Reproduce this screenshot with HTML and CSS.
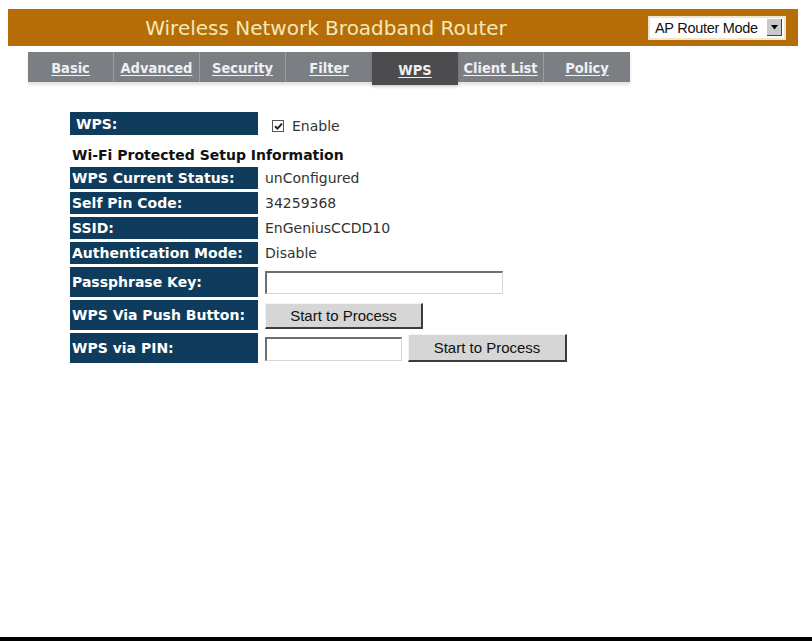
FILE: index.html
```html
<!DOCTYPE html>
<html>
<head>
<meta charset="utf-8">
<title>Wireless Network Broadband Router</title>
<link rel="stylesheet" href="styles.css">
</head>
<body>
<div class="page">
  <header class="topbar">
    <div class="title">Wireless Network Broadband Router</div>
    <div class="mode-select">
      <span class="mode-text">AP Router Mode</span>
      <span class="mode-btn"><svg width="7" height="5" viewBox="0 0 7 5"><path d="M0 0H7L3.5 4.5Z" fill="#000"/></svg></span>
    </div>
  </header>

  <nav class="tabs">
    <a class="tab sep" href="#">Basic</a>
    <a class="tab sep" href="#">Advanced</a>
    <a class="tab sep" href="#">Security</a>
    <a class="tab" href="#">Filter</a>
    <a class="tab active" href="#">WPS</a>
    <a class="tab sep" href="#">Client List</a>
    <a class="tab" href="#">Policy</a>
  </nav>

  <main class="content">
    <div class="row row-wps">
      <div class="label label-wide">WPS:</div>
      <div class="value enable">
        <span class="check"><svg width="9" height="9" viewBox="0 0 9 9"><path d="M1 4.2L3.4 6.6L8 1.6" fill="none" stroke="#222" stroke-width="2"/></svg></span>
        <span>Enable</span>
      </div>
    </div>

    <div class="section-title">Wi-Fi Protected Setup Information</div>

    <div class="grid">
      <div class="label">WPS Current Status:</div>
      <div class="value">unConfigured</div>

      <div class="label">Self Pin Code:</div>
      <div class="value">34259368</div>

      <div class="label">SSID:</div>
      <div class="value">EnGeniusCCDD10</div>

      <div class="label">Authentication Mode:</div>
      <div class="value">Disable</div>

      <div class="label">Passphrase Key:</div>
      <div class="value"><span class="textbox textbox-long"></span></div>

      <div class="label">WPS Via Push Button:</div>
      <div class="value"><span class="button button-push">Start to Process</span></div>

      <div class="label">WPS via PIN:</div>
      <div class="value pin">
        <span class="textbox textbox-short"></span>
        <span class="button button-pin">Start to Process</span>
      </div>
    </div>
  </main>

  <div class="spacer"></div>
  <div class="bottom-rule"></div>
</div>
</body>
</html>
```

FILE: styles.css
```css
html, body {
  margin: 0;
  padding: 0;
  background: #ffffff;
}

.page {
  width: 812px;
  height: 641px;
  display: flex;
  flex-direction: column;
  font-family: "DejaVu Sans", Verdana, sans-serif;
}

/* ---------- header ---------- */
.topbar {
  margin: 9px 14px 0 8px;
  height: 37px;
  background: #b66d08;
  display: flex;
  align-items: center;
}

.title {
  width: 636px;
  text-align: center;
  font-family: "DejaVu Sans", Verdana, sans-serif;
  font-size: 20px;
  color: #f3e9b8;
  padding-top: 1px;
}

.mode-select {
  margin-left: 4px;
  width: 134px;
  height: 20px;
  background: #ffffff;
  border: 2px solid #efe6cc;
  display: flex;
  align-items: center;
  justify-content: space-between;
}

.mode-text {
  font-family: "Liberation Sans", Arial, sans-serif;
  font-size: 14.5px;
  color: #111;
  padding-left: 5px;
  letter-spacing: -0.3px;
  white-space: nowrap;
}

.mode-btn {
  width: 14px;
  height: 16px;
  margin-right: 2px;
  background: #c9c9cc;
  border-right: 1px solid #444;
  border-bottom: 1px solid #444;
  display: flex;
  align-items: center;
  justify-content: center;
  flex-shrink: 0;
}

/* ---------- tabs ---------- */
.tabs {
  margin: 6px 0 0 28px;
  width: 602px;
  height: 30px;
  display: flex;
  background: #7b7e83;
  box-shadow: 0 3px 3px rgba(0, 0, 0, 0.12);
}

.tab {
  width: 86px;
  height: 30px;
  box-sizing: border-box;
  display: flex;
  align-items: center;
  justify-content: center;
  padding-top: 2px;
  font-family: "DejaVu Sans Condensed", "DejaVu Sans", sans-serif;
  font-weight: bold;
  font-size: 14.5px;
  color: #eef0f3;
  text-decoration: underline;
  text-underline-offset: 2px;
  white-space: nowrap;
}

.tab.sep {
  border-right: 1px solid #9a9da3;
}

.tab.active {
  background: #4c4c4e;
  height: 33px;
  box-shadow: 0 2px 3px rgba(0, 0, 0, 0.15);
}

/* ---------- content ---------- */
.content {
  margin: 30px 0 0 70px;
  font-size: 14px;
}

.row {
  display: flex;
  align-items: center;
}

.row-wps {
  height: 23px;
}

.label {
  width: 188px;
  box-sizing: border-box;
  background: #0f3b5c;
  color: #ffffff;
  font-weight: bold;
  font-size: 14px;
  padding-left: 2px;
  display: flex;
  align-items: center;
  align-self: stretch;
  white-space: nowrap;
  overflow: hidden;
}

.label-wide {
  padding-left: 6px;
}

.value {
  color: #333;
  padding-left: 7px;
  display: flex;
  align-items: center;
  white-space: nowrap;
}

.enable {
  padding-left: 14px;
  padding-top: 5px;
}

.check {
  width: 10px;
  height: 10px;
  border: 1px solid #555;
  background: #fff;
  display: inline-flex;
  align-items: center;
  justify-content: center;
  margin-right: 8px;
}

.section-title {
  margin: 12px 0 0 2px;
  font-weight: bold;
  color: #111;
  font-size: 14px;
  height: 20px;
}

.grid {
  display: grid;
  grid-template-columns: 188px auto;
  grid-template-rows: 22px 22px 22px 22px 30px 30px 30px;
  row-gap: 3px;
}

.textbox {
  display: inline-block;
  box-sizing: border-box;
  background: #fff;
  border-top: 2px solid #6e6e6e;
  border-left: 2px solid #6e6e6e;
  border-right: 1px solid #d6d6d6;
  border-bottom: 1px solid #d6d6d6;
}

.textbox-long {
  width: 238px;
  height: 23px;
}

.textbox-short {
  width: 137px;
  height: 24px;
  margin-top: 2px;
}

.button {
  display: inline-flex;
  align-items: center;
  justify-content: center;
  box-sizing: border-box;
  background: #d6d6d6;
  border-top: 1px solid #f4f4f4;
  border-left: 1px solid #f4f4f4;
  border-right: 2px solid #3c3c3c;
  border-bottom: 2px solid #3c3c3c;
  font-family: "Liberation Sans", Arial, sans-serif;
  font-size: 15px;
  color: #111;
}

.button-push {
  width: 158px;
  height: 26px;
  margin-top: 1px;
}

.pin {
  gap: 6px;
}

.button-pin {
  width: 159px;
  height: 28px;
}

.spacer {
  flex: 1;
}

.bottom-rule {
  height: 4px;
  background: #000;
}
```
